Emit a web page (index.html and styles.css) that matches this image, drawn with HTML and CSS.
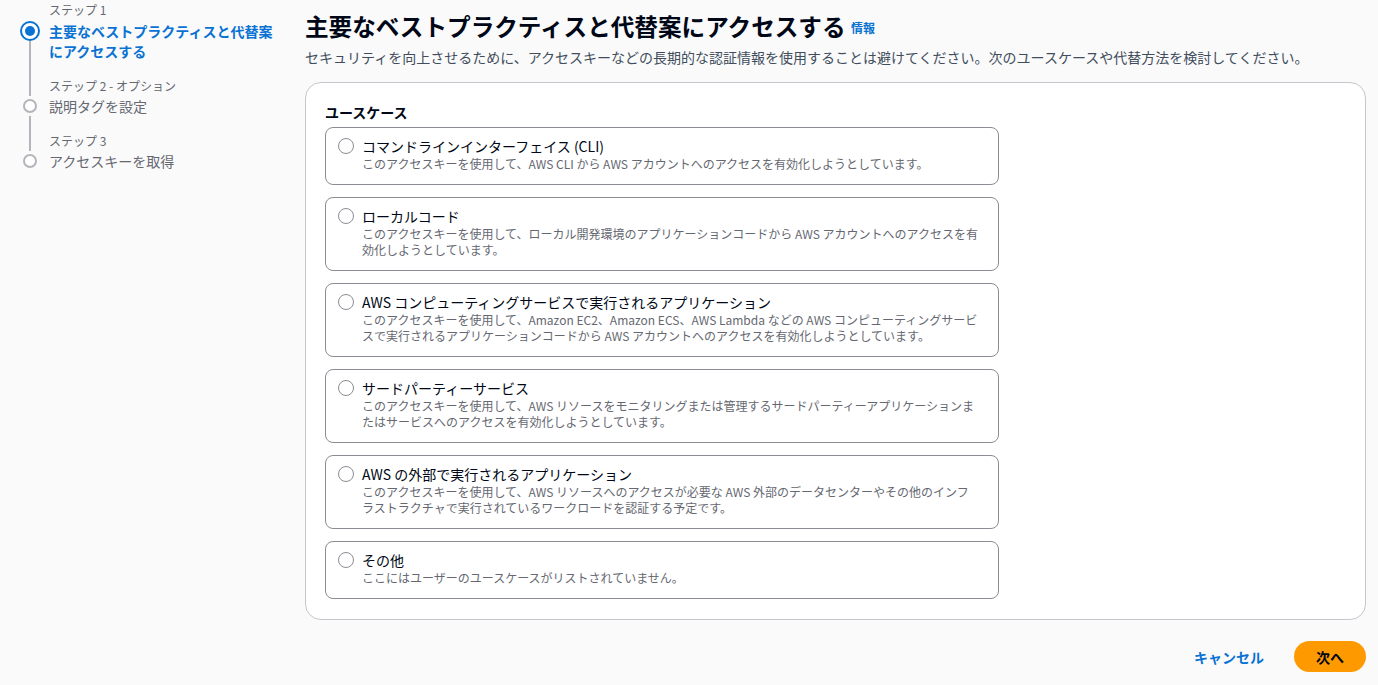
FILE: index.html
```html
<!DOCTYPE html>
<html lang="ja">
<head>
<meta charset="utf-8">
<title>アクセスキー</title>
<link rel="stylesheet" href="styles.css">
</head>
<body>
<div class="page">
  <nav class="steps">
    <div class="step">
      <div class="rail-top"></div>
      <div class="step-label">ステップ 1</div>
      <div class="rail">
        <span class="dot dot-active"><span class="dot-inner"></span></span>
        <span class="line"></span>
      </div>
      <div class="step-title active">主要なベストプラクティスと代替案にアクセスする</div>
    </div>
    <div class="step">
      <div class="rail-top"><span class="line"></span></div>
      <div class="step-label">ステップ 2 - オプション</div>
      <div class="rail">
        <span class="dot"></span>
        <span class="line"></span>
      </div>
      <div class="step-title">説明タグを設定</div>
    </div>
    <div class="step">
      <div class="rail-top"><span class="line"></span></div>
      <div class="step-label">ステップ 3</div>
      <div class="rail">
        <span class="dot"></span>
      </div>
      <div class="step-title">アクセスキーを取得</div>
    </div>
  </nav>

  <main class="main">
    <header class="header">
      <h1 class="title">主要なベストプラクティスと代替案にアクセスする <a class="info" href="#">情報</a></h1>
      <p class="subtitle">セキュリティを向上させるために、アクセスキーなどの長期的な認証情報を使用することは避けてください。次のユースケースや代替方法を検討してください。</p>
    </header>

    <section class="panel">
      <div class="group-label">ユースケース</div>
      <div class="tiles">
        <label class="tile">
          <span class="radio"></span>
          <span class="tile-text">
            <span class="tile-title">コマンドラインインターフェイス (CLI)</span>
            <span class="tile-desc">このアクセスキーを使用して、AWS CLI から AWS アカウントへのアクセスを有効化しようとしています。</span>
          </span>
        </label>
        <label class="tile">
          <span class="radio"></span>
          <span class="tile-text">
            <span class="tile-title">ローカルコード</span>
            <span class="tile-desc">このアクセスキーを使用して、ローカル開発環境のアプリケーションコードから AWS アカウントへのアクセスを有効化しようとしています。</span>
          </span>
        </label>
        <label class="tile">
          <span class="radio"></span>
          <span class="tile-text">
            <span class="tile-title">AWS コンピューティングサービスで実行されるアプリケーション</span>
            <span class="tile-desc">このアクセスキーを使用して、Amazon EC2、Amazon ECS、AWS Lambda などの AWS コンピューティングサービスで実行されるアプリケーションコードから AWS アカウントへのアクセスを有効化しようとしています。</span>
          </span>
        </label>
        <label class="tile">
          <span class="radio"></span>
          <span class="tile-text">
            <span class="tile-title">サードパーティーサービス</span>
            <span class="tile-desc">このアクセスキーを使用して、AWS リソースをモニタリングまたは管理するサードパーティーアプリケーションまたはサービスへのアクセスを有効化しようとしています。</span>
          </span>
        </label>
        <label class="tile">
          <span class="radio"></span>
          <span class="tile-text">
            <span class="tile-title">AWS の外部で実行されるアプリケーション</span>
            <span class="tile-desc">このアクセスキーを使用して、AWS リソースへのアクセスが必要な AWS 外部のデータセンターやその他のインフラストラクチャで実行されているワークロードを認証する予定です。</span>
          </span>
        </label>
        <label class="tile">
          <span class="radio"></span>
          <span class="tile-text">
            <span class="tile-title">その他</span>
            <span class="tile-desc">ここにはユーザーのユースケースがリストされていません。</span>
          </span>
        </label>
      </div>
    </section>

    <div class="actions">
      <button class="btn-link" type="button">キャンセル</button>
      <button class="btn-primary" type="button">次へ</button>
    </div>
  </main>
</div>
</body>
</html>
```

FILE: styles.css
```css
* { box-sizing: border-box; }

html, body {
  margin: 0;
  padding: 0;
  background: #fafafa;
  color: #000716;
  font-family: "Noto Sans CJK JP", "Noto Sans", sans-serif;
}

.page {
  display: grid;
  grid-template-columns: 305px 1fr;
  padding-right: 12px;
  width: 1378px;
  height: 685px;
  overflow: hidden;
}

/* ---------- left steps ---------- */
.steps {
  padding: 2px 26px 0 20px;
}

.step {
  display: grid;
  grid-template-columns: 20px 1fr;
  column-gap: 9px;
}

.rail-top {
  display: flex;
  flex-direction: column;
  align-items: center;
}

.rail {
  display: flex;
  flex-direction: column;
  align-items: center;
}

.line {
  display: block;
  width: 2px;
  background: #b4b4bb;
  flex: 1 1 auto;
}

.dot {
  display: block;
  width: 14px;
  height: 14px;
  margin: 3px 0;
  border: 2px solid #b4b4bb;
  border-radius: 50%;
  background: #fff;
  flex: none;
}

.dot-active {
  width: 20px;
  height: 20px;
  margin: 0;
  border: 2px solid #0972d3;
  display: flex;
  align-items: center;
  justify-content: center;
}

.dot-inner {
  width: 10px;
  height: 10px;
  border-radius: 50%;
  background: #0972d3;
}

.step-label {
  font-size: 12px;
  line-height: 16px;
  color: #656871;
  margin-bottom: 2px;
}

.step:first-child .step-label { margin-bottom: 3px; }

.step-title {
  font-size: 14px;
  line-height: 20px;
  color: #656871;
  padding-bottom: 17px;
}

.step:last-child .step-title { padding-bottom: 0; }

.step-title.active {
  color: #0972d3;
  font-weight: 700;
}

/* ---------- main ---------- */
.main {
  display: flex;
  flex-direction: column;
}

.header {
  padding-top: 10px;
}

.title {
  margin: 0;
  font-size: 23.6px;
  line-height: 32px;
  font-weight: 700;
  color: #000716;
}

.info {
  font-size: 12px;
  font-weight: 700;
  color: #0972d3;
  text-decoration: none;
  vertical-align: 3px;
  margin-left: 0;
}

.subtitle {
  margin: 3px 0 0;
  font-size: 14px;
  line-height: 20px;
  color: #414d5c;
}

.panel {
  margin-top: 15px;
  background: #fff;
  border: 1px solid #c6c6cd;
  border-radius: 16px;
  padding: 19px 19px 20px;
}

.group-label {
  font-size: 14px;
  line-height: 20px;
  font-weight: 700;
  margin-bottom: 5px;
}

.tiles {
  display: flex;
  flex-direction: column;
  gap: 12px;
  width: 674px;
}

.tile {
  display: flex;
  align-items: flex-start;
  gap: 8px;
  border: 1px solid #8c8c94;
  border-radius: 8px;
  padding: 8px 19px 12px 12px;
  background: #fff;
  cursor: pointer;
}

.radio {
  flex: none;
  width: 16px;
  height: 16px;
  margin-top: 2px;
  border: 1.5px solid #8c8c94;
  border-radius: 50%;
  background: #fff;
}

.tile-text {
  display: flex;
  flex-direction: column;
}

.tile-title {
  font-size: 14px;
  line-height: 20px;
  color: #000716;
}

.tile-desc {
  font-size: 12px;
  line-height: 16px;
  color: #656871;
}

.actions {
  display: flex;
  justify-content: flex-end;
  align-items: center;
  gap: 20px;
  margin-top: 21px;
}

.btn-link {
  background: none;
  border: none;
  font-family: inherit;
  font-size: 14px;
  font-weight: 700;
  color: #0972d3;
  padding: 4px 10px;
  cursor: pointer;
}

.btn-primary {
  background: #ff9900;
  border: none;
  border-radius: 20px;
  font-family: inherit;
  font-size: 14px;
  font-weight: 700;
  color: #000716;
  width: 72px;
  height: 31px;
  cursor: pointer;
}
```
